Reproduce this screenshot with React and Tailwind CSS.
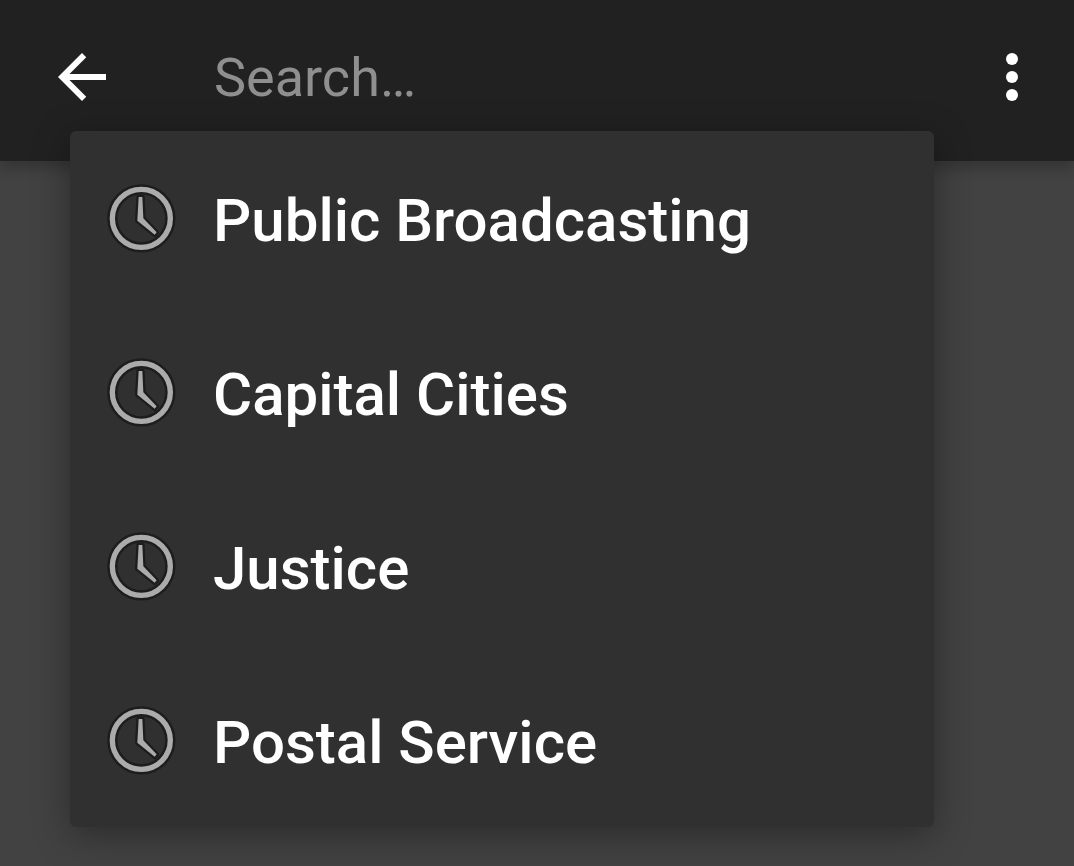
import React from "react";

const recentSearches = ["Public Broadcasting", "Capital Cities", "Justice", "Postal Service"];

function ClockIcon() {
  return (
    <svg viewBox="27 36 216 216" className="size-[72px] shrink-0" fill="none" aria-hidden="true">
      <circle cx="136" cy="145" r="87" stroke="#1d1d1d" strokeWidth="31" />
      <path
        d="M128 81h11l3 64 40 42-6 7-52-42z"
        fill="#1d1d1d"
        stroke="#1d1d1d"
        strokeWidth="14"
        strokeLinejoin="round"
      />
      <circle cx="136" cy="145" r="87" stroke="#ababab" strokeWidth="16" />
      <path d="M128 81h11l3 64 40 42-6 7-52-42z" fill="#ababab" />
    </svg>
  );
}

export default function App() {
  return (
    <div className="min-h-screen bg-[#424242] font-['Roboto',sans-serif]">
      <header className="relative flex h-[161px] items-center bg-[#212121] pr-[26px] pb-2 pl-[46px] shadow-[0_8px_12px_rgba(0,0,0,0.2)]">
        <button type="button" aria-label="Back" className="shrink-0">
          <svg viewBox="0 0 24 24" className="size-[72px]" fill="#fff" aria-hidden="true">
            <path d="M20 11H7.83l5.59-5.59L12 4l-8 8 8 8 1.41-1.41L7.83 13H20v-2z" />
          </svg>
        </button>
        <input
          type="text"
          aria-label="Search"
          placeholder="Search…"
          className="ml-24 h-[72px] min-w-0 flex-1 bg-transparent pt-0.5 text-[54px] text-white outline-none placeholder:text-[#8f8f8f]"
        />
        <button type="button" aria-label="More options" className="shrink-0">
          <svg viewBox="0 0 24 24" className="size-[72px]" fill="#fff" aria-hidden="true">
            <circle cx="12" cy="6" r="2" />
            <circle cx="12" cy="12" r="2" />
            <circle cx="12" cy="18" r="2" />
          </svg>
        </button>
        <ul className="absolute top-[131px] right-[140px] left-[70px] rounded-md bg-[#303030] shadow-[0_8px_36px_rgba(0,0,0,0.35)]">
          {recentSearches.map((term) => (
            <li key={term}>
              <button type="button" className="flex h-[174px] w-full items-center gap-9 pl-[35px] text-left">
                <ClockIcon />
                <span className="pt-1.5 text-[60px] font-medium text-white">{term}</span>
              </button>
            </li>
          ))}
        </ul>
      </header>
    </div>
  );
}
